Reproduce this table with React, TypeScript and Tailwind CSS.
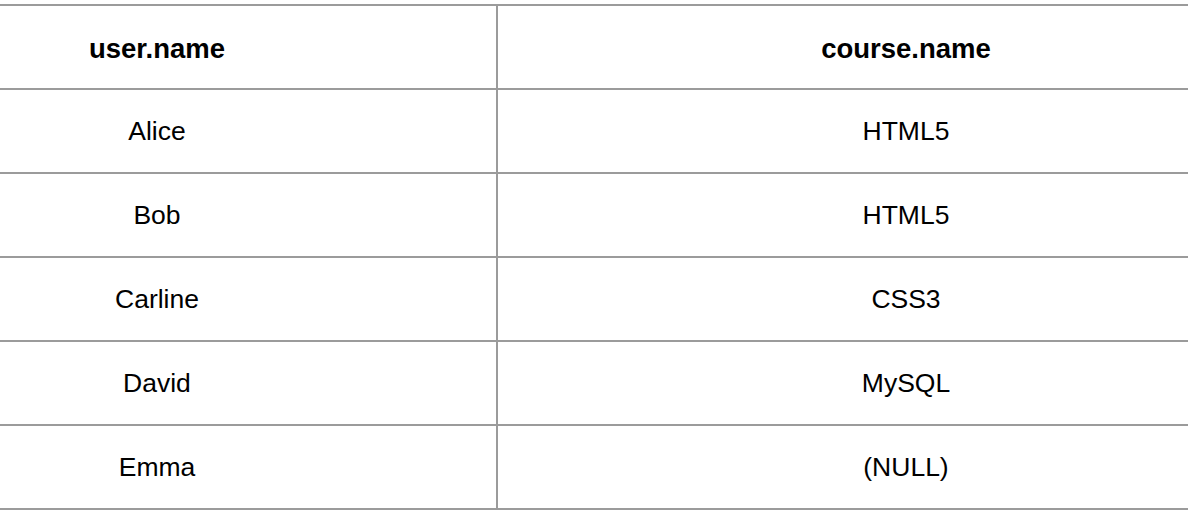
import React from "react";

const rows: [string, string][] = [
  ["Alice", "HTML5"],
  ["Bob", "HTML5"],
  ["Carline", "CSS3"],
  ["David", "MySQL"],
  ["Emma", "(NULL)"],
];

function Row({ a, b, head, last }: { a: string; b: string; head?: boolean; last?: boolean }) {
  const t = head ? "font-bold text-[27.5px] pt-[4px]" : "text-[26.5px] pt-[1px]";
  return (
    <div
      className={`flex h-[84px] border-t-2 border-[#9b9b9b] ${last ? "h-[86px] border-b-2" : ""}`}
    >
      <div className="w-[498px] shrink-0 border-r-2 border-[#9b9b9b] flex items-center justify-center pr-[182px]">
        <span className={t}>{a}</span>
      </div>
      <div className="flex-1 flex items-center justify-center pl-[126px]">
        <span className={t}>{b}</span>
      </div>
    </div>
  );
}

export default function App() {
  return (
    <div
      className="w-[1188px] h-[520px] bg-white pt-[4px] text-black"
      style={{ fontFamily: '"Liberation Sans", Arial, sans-serif' }}
    >
      <Row a="user.name" b="course.name" head />
      {rows.map((r, i) => (
        <Row key={i} a={r[0]} b={r[1]} last={i === rows.length - 1} />
      ))}
    </div>
  );
}
